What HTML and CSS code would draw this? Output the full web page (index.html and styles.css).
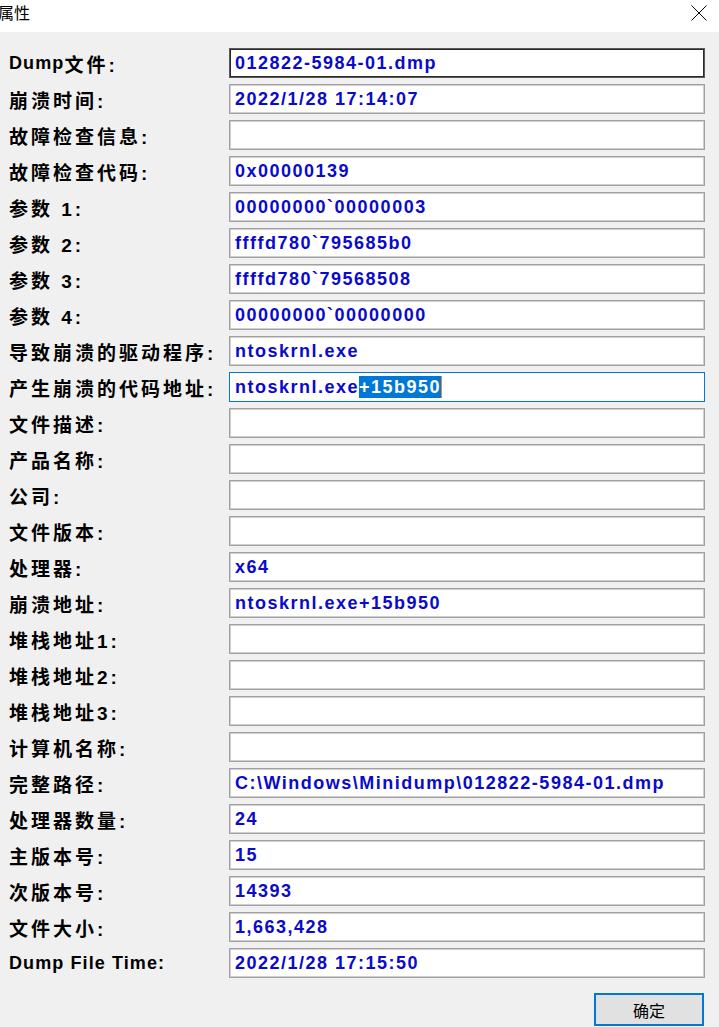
FILE: index.html
```html
<!DOCTYPE html>
<html lang="zh-CN">
<head>
<meta charset="utf-8">
<title>属性</title>
<link rel="stylesheet" href="styles.css">
</head>
<body>
<div class="window">
  <div class="titlebar">
    <span class="title">属性</span>
    <svg class="close" width="16" height="16" viewBox="0 0 16 16"><path d="M0.5 0.5 L15.5 15.5 M15.5 0.5 L0.5 15.5" stroke="#000" stroke-width="1" fill="none"/></svg>
  </div>
  <div class="body">
    <div class="form">
      <div class="label"><span class="lat">Dump</span>文件:</div><div class="field dark">012822-5984-01.dmp</div>
      <div class="label">崩溃时间:</div><div class="field">2022/1/28 17:14:07</div>
      <div class="label">故障检查信息:</div><div class="field"></div>
      <div class="label">故障检查代码:</div><div class="field">0x00000139</div>
      <div class="label">参数 1:</div><div class="field">00000000`00000003</div>
      <div class="label">参数 2:</div><div class="field">ffffd780`795685b0</div>
      <div class="label">参数 3:</div><div class="field">ffffd780`79568508</div>
      <div class="label">参数 4:</div><div class="field">00000000`00000000</div>
      <div class="label">导致崩溃的驱动程序:</div><div class="field">ntoskrnl.exe</div>
      <div class="label">产生崩溃的代码地址:</div><div class="field focus">ntoskrnl.exe<span class="sel">+15b950</span><span class="caret"></span></div>
      <div class="label">文件描述:</div><div class="field"></div>
      <div class="label">产品名称:</div><div class="field"></div>
      <div class="label">公司:</div><div class="field"></div>
      <div class="label">文件版本:</div><div class="field"></div>
      <div class="label">处理器:</div><div class="field">x64</div>
      <div class="label">崩溃地址:</div><div class="field">ntoskrnl.exe+15b950</div>
      <div class="label">堆栈地址1:</div><div class="field"></div>
      <div class="label">堆栈地址2:</div><div class="field"></div>
      <div class="label">堆栈地址3:</div><div class="field"></div>
      <div class="label">计算机名称:</div><div class="field"></div>
      <div class="label">完整路径:</div><div class="field">C:\Windows\Minidump\012822-5984-01.dmp</div>
      <div class="label">处理器数量:</div><div class="field">24</div>
      <div class="label">主版本号:</div><div class="field">15</div>
      <div class="label">次版本号:</div><div class="field">14393</div>
      <div class="label">文件大小:</div><div class="field">1,663,428</div>
      <div class="label"><span class="lat">Dump File Time:</span></div><div class="field">2022/1/28 17:15:50</div>
    </div>
    <div class="actions">
      <button class="btn" type="button">确定</button>
    </div>
  </div>
</div>
</body>
</html>
```
FILE: styles.css
```css
* { box-sizing: border-box; }
html, body { margin: 0; padding: 0; }
body {
  width: 719px;
  height: 1027px;
  overflow: hidden;
  background: #f0f0f0;
  font-family: "Liberation Sans", "Noto Sans CJK SC", sans-serif;
}
.window { width: 719px; }
.titlebar {
  height: 32px;
  background: #ffffff;
  display: flex;
  justify-content: space-between;
  align-items: flex-start;
}
.title {
  font-family: "Noto Sans CJK SC", sans-serif;
  font-size: 16px;
  line-height: 22px;
  color: #000;
  margin-left: -2px;
  margin-top: 1px;
}
.close {
  margin-top: 5px;
  margin-right: 12px;
}
.body {
  padding: 16px 14px 0 9px;
}
.form {
  display: grid;
  grid-template-columns: 220px 476px;
  grid-auto-rows: 30px;
  row-gap: 6px;
}
.label {
  display: flex;
  align-items: center;
  font-family: "Liberation Sans", "Noto Sans CJK SC", sans-serif;
  font-weight: bold;
  font-size: 19px;
  letter-spacing: 3px;
  color: #000;
  white-space: nowrap;
  padding-top: 1px;
}
.lat { font-size: 18px; letter-spacing: 1.1px; }
.field {
  display: flex;
  align-items: center;
  background: #fff;
  border: 1px solid #a0a0a0;
  box-shadow: inset 0 0 0 1px #cfcfcf;
  padding-left: 5px;
  font-family: "Liberation Sans", sans-serif;
  font-weight: bold;
  font-size: 18px;
  letter-spacing: 1.5px;
  color: #0a0acc;
  white-space: nowrap;
  overflow: hidden;
}
.field.dark {
  border-color: #5a5a5a;
  box-shadow: inset 0 0 0 1px #2a2a2a;
}
.field.focus {
  border-color: #0078d7;
  box-shadow: none;
}
.sel {
  background: #0078d7;
  color: #fff;
  line-height: 22px;
  display: inline-block;
}
.caret {
  display: inline-block;
  width: 1px;
  height: 22px;
  background: #e08a3c;
}
.actions {
  display: flex;
  justify-content: flex-end;
  margin-top: 15px;
  padding-right: 1px;
}
.btn {
  width: 110px;
  height: 33px;
  background: #e1e1e1;
  border: 2px solid #0078d7;
  font-family: "Noto Sans CJK SC", sans-serif;
  font-size: 16px;
  color: #000;
  padding: 0;
  margin: 0;
}
```
